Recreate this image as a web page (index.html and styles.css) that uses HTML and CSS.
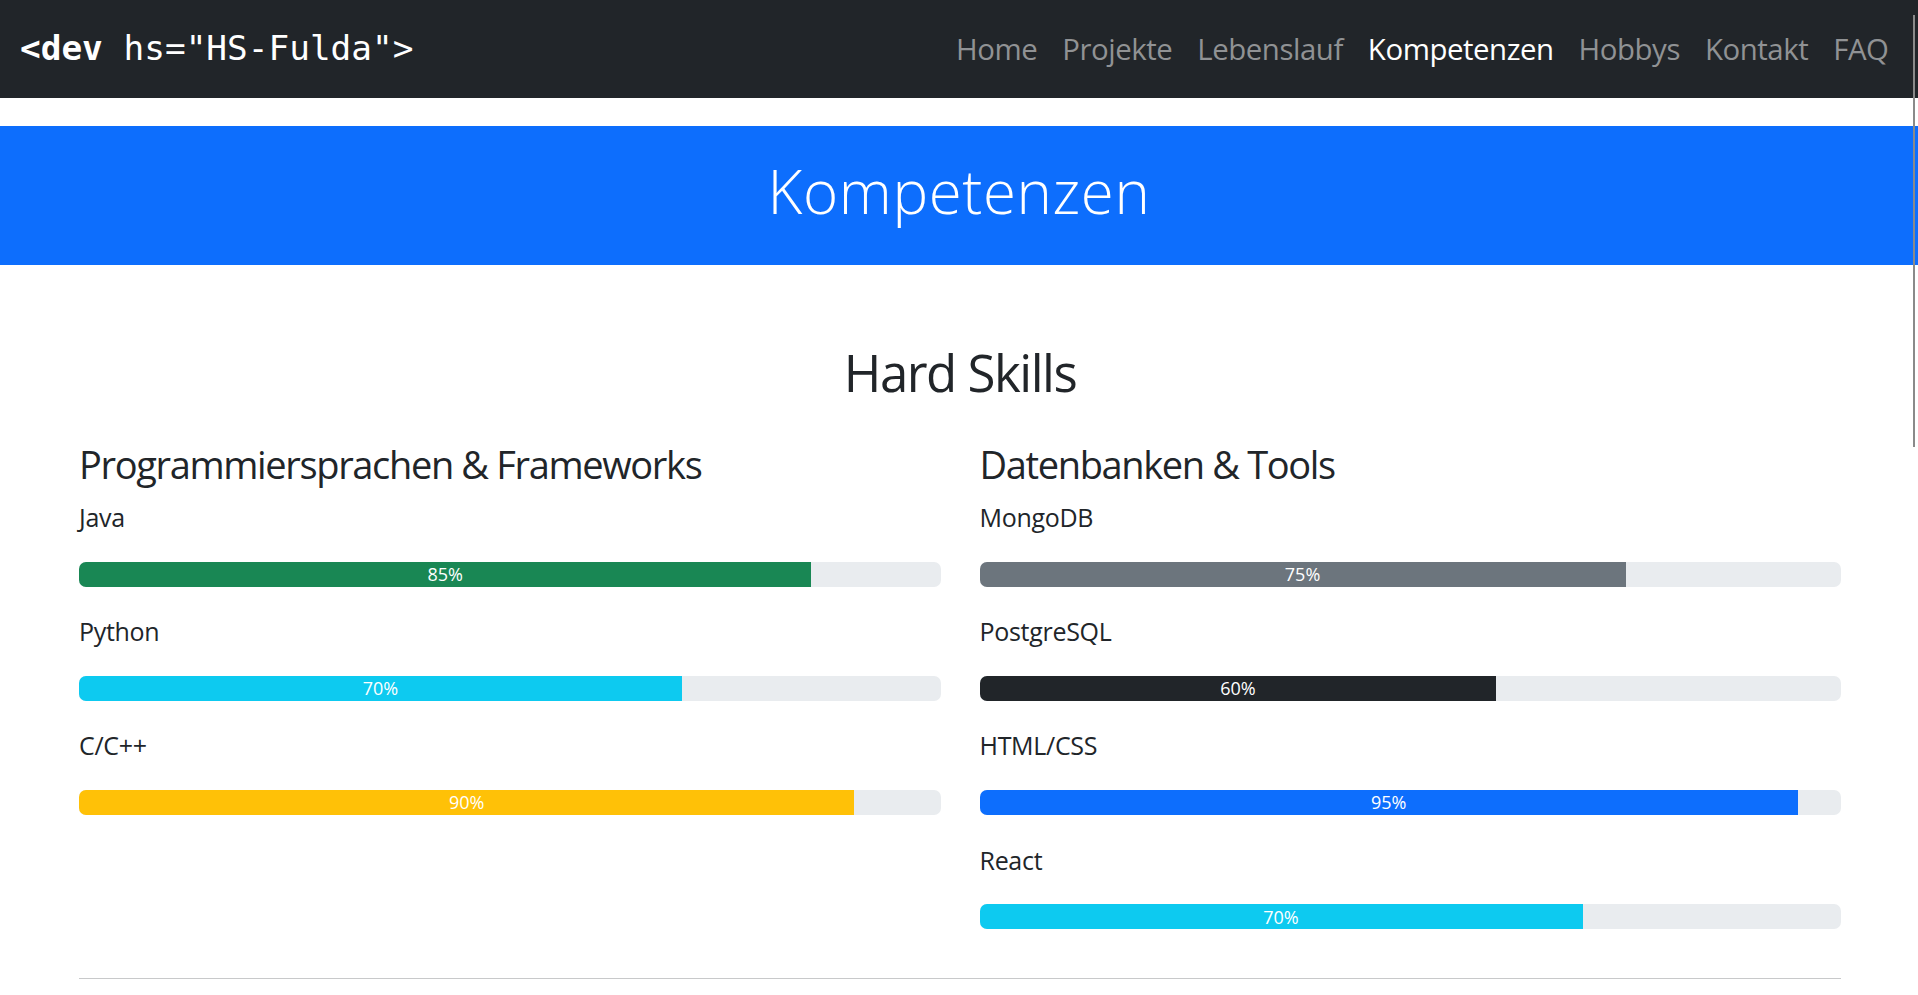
FILE: index.html
```html
<!DOCTYPE html>
<html lang="de">
<head>
<meta charset="utf-8">
<title>Kompetenzen</title>
<link rel="stylesheet" href="styles.css">
</head>
<body>
<nav class="navbar">
  <a class="brand" href="#"><b>&lt;dev</b> hs="HS-Fulda"&gt;</a>
  <ul class="nav-links">
    <li><a class="nav-link" href="#">Home</a></li>
    <li><a class="nav-link" href="#">Projekte</a></li>
    <li><a class="nav-link" href="#">Lebenslauf</a></li>
    <li><a class="nav-link active" href="#">Kompetenzen</a></li>
    <li><a class="nav-link" href="#">Hobbys</a></li>
    <li><a class="nav-link" href="#">Kontakt</a></li>
    <li><a class="nav-link" href="#">FAQ</a></li>
  </ul>
</nav>

<header class="hero">
  <h1 class="hero-title">Kompetenzen</h1>
</header>

<main class="container">
  <h2 class="section-title">Hard Skills</h2>
  <div class="skill-grid">
    <div class="skill-col">
      <h3 class="col-title">Programmiersprachen &amp; Frameworks</h3>
      <div class="skill">
        <h5 class="skill-name">Java</h5>
        <div class="progress"><div class="bar bg-success" style="width:85%">85%</div></div>
      </div>
      <div class="skill">
        <h5 class="skill-name">Python</h5>
        <div class="progress"><div class="bar bg-info" style="width:70%">70%</div></div>
      </div>
      <div class="skill">
        <h5 class="skill-name">C/C++</h5>
        <div class="progress"><div class="bar bg-warning" style="width:90%">90%</div></div>
      </div>
    </div>
    <div class="skill-col">
      <h3 class="col-title">Datenbanken &amp; Tools</h3>
      <div class="skill">
        <h5 class="skill-name">MongoDB</h5>
        <div class="progress"><div class="bar bg-secondary" style="width:75%">75%</div></div>
      </div>
      <div class="skill">
        <h5 class="skill-name">PostgreSQL</h5>
        <div class="progress"><div class="bar bg-dark" style="width:60%">60%</div></div>
      </div>
      <div class="skill">
        <h5 class="skill-name">HTML/CSS</h5>
        <div class="progress"><div class="bar bg-primary" style="width:95%">95%</div></div>
      </div>
      <div class="skill">
        <h5 class="skill-name">React</h5>
        <div class="progress"><div class="bar bg-info" style="width:70%">70%</div></div>
      </div>
    </div>
  </div>
  <hr class="divider">
</main>

<div class="scroll-thumb"></div>
</body>
</html>
```

FILE: styles.css
```css
* { box-sizing: border-box; }

html, body {
  margin: 0;
  padding: 0;
  overflow: hidden;
}

body {
  font-family: "Open Sans", "Noto Sans", sans-serif;
  color: #212529;
  background: #fff;
}

a { text-decoration: none; }

.navbar {
  height: 98px;
  background: #212529;
  display: flex;
  align-items: center;
  justify-content: space-between;
  padding: 0 17px 0 20px;
}

.brand {
  font-family: "DejaVu Sans Mono", "Liberation Mono", monospace;
  font-size: 34.4px;
  line-height: 1.5;
  color: #fff;
  white-space: pre;
}

.brand b { font-weight: 700; }

.nav-links {
  list-style: none;
  margin: 0;
  padding: 0;
  display: flex;
}

.nav-link {
  display: block;
  padding: 0 12.5px;
  font-size: 29.4px;
  line-height: 1.5;
  letter-spacing: -0.45px;
  color: #909294;
}

.nav-link.active { color: #fff; }

.hero {
  margin-top: 28px;
  height: 139px;
  background: #0d6efd;
  padding-top: 29px;
  text-align: center;
}

.hero-title {
  margin: 0;
  font-size: 60px;
  font-weight: 300;
  line-height: 1.2;
  letter-spacing: 0.6px;
  color: #fff;
}

.container {
  margin: 0 77px 0 79px;
  padding-top: 77px;
}

.section-title {
  margin: 0;
  text-align: center;
  font-size: 51px;
  font-weight: 400;
  line-height: 1.2;
  letter-spacing: -1.5px;
}

.skill-grid {
  display: grid;
  grid-template-columns: 1fr 1fr;
  column-gap: 39px;
  margin-top: 39px;
}

.col-title {
  margin: 0 0 11.5px;
  font-size: 38px;
  font-weight: 400;
  line-height: 1.2;
  letter-spacing: -1.35px;
}

.skill { padding-bottom: 26.6px; }

.skill-name {
  margin: 0 0 25px;
  font-size: 25px;
  font-weight: 400;
  line-height: 1.5;
  letter-spacing: -0.3px;
}

.progress {
  height: 25px;
  border-radius: 7px;
  background: #e9ecef;
  overflow: hidden;
  display: flex;
}

.bar {
  height: 100%;
  display: flex;
  align-items: center;
  justify-content: center;
  color: #fff;
  font-size: 18px;
  line-height: 1;
  white-space: nowrap;
}

.bg-success { background: #198754; }
.bg-info { background: #0dcaf0; }
.bg-warning { background: #ffc107; }
.bg-secondary { background: #6c757d; }
.bg-dark { background: #212529; }
.bg-primary { background: #0d6efd; }

.divider {
  margin: 22px 0 0;
  border: 0;
  border-top: 1px solid #c8c9ca;
}

.scroll-thumb {
  position: fixed;
  top: 15px;
  right: 3px;
  width: 2px;
  height: 432px;
  background: #8a8a8a;
}
```
